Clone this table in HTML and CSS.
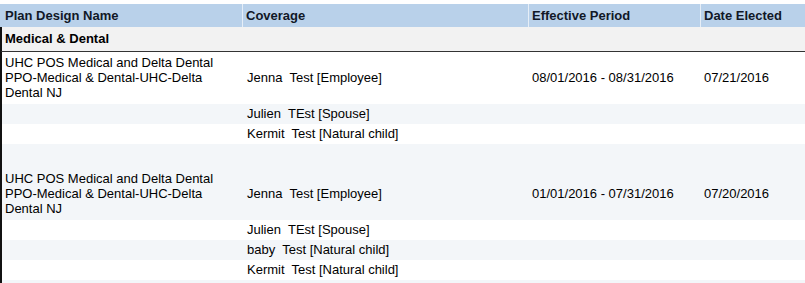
FILE: index.html
```html
<!DOCTYPE html>
<html>
<head>
<meta charset="utf-8">
<link rel="stylesheet" href="styles.css">
</head>
<body>
<div class="wrap">
<table class="plans">
<colgroup>
<col class="w1"><col class="w2"><col class="w3"><col class="w4">
</colgroup>
<thead>
<tr>
<th class="first">Plan Design Name</th>
<th>Coverage</th>
<th>Effective Period</th>
<th>Date Elected</th>
</tr>
</thead>
<tbody>
<tr class="group"><td colspan="4" class="first">Medical &amp; Dental</td></tr>
<tr class="plan white">
<td class="first">UHC POS Medical and Delta Dental PPO-Medical &amp; Dental-UHC-Delta Dental NJ</td>
<td class="cov">Jenna&nbsp; Test [Employee]</td>
<td class="per">08/01/2016 - 08/31/2016</td>
<td class="dt">07/21/2016</td>
</tr>
<tr class="dep light"><td class="first"></td><td class="cov">Julien&nbsp; TEst [Spouse]</td><td></td><td></td></tr>
<tr class="dep white"><td class="first"></td><td class="cov">Kermit&nbsp; Test [Natural child]</td><td></td><td></td></tr>
<tr class="spacer light"><td colspan="4" class="first"></td></tr>
<tr class="plan light">
<td class="first">UHC POS Medical and Delta Dental PPO-Medical &amp; Dental-UHC-Delta Dental NJ</td>
<td class="cov">Jenna&nbsp; Test [Employee]</td>
<td class="per">01/01/2016 - 07/31/2016</td>
<td class="dt">07/20/2016</td>
</tr>
<tr class="dep white"><td class="first"></td><td class="cov">Julien&nbsp; TEst [Spouse]</td><td></td><td></td></tr>
<tr class="dep light"><td class="first"></td><td class="cov">baby&nbsp; Test [Natural child]</td><td></td><td></td></tr>
<tr class="dep white"><td class="first"></td><td class="cov">Kermit&nbsp; Test [Natural child]</td><td></td><td></td></tr>
<tr class="dep light"><td class="first"></td><td></td><td></td><td></td></tr>
</tbody>
</table>
</div>
</body>
</html>
```
FILE: styles.css
```css
html, body {
  margin: 0;
  padding: 0;
  background: #ffffff;
}
body {
  font-family: "Liberation Sans", Arial, sans-serif;
  font-size: 13px;
  color: #000000;
}
.wrap {
  padding-top: 4px;
}
.plans {
  width: 805px;
  table-layout: fixed;
  border-collapse: separate;
  border-spacing: 0;
}
.w1 { width: 242px; }
.w2 { width: 286px; }
.w3 { width: 172px; }
.w4 { width: 105px; }

.plans th {
  background: #b9d1ea;
  color: #111827;
  font-weight: bold;
  text-align: left;
  line-height: 23px;
  padding: 0 3px;
  border-left: 1px solid #e6eef7;
  white-space: nowrap;
}
.plans th.first {
  border-left: none;
  padding-left: 5px;
}
.plans td {
  padding: 0 4px;
  text-align: left;
  vertical-align: middle;
}
.plans td.first {
  border-left: 2px solid #111;
  padding-left: 3px;
  padding-right: 4px;
}
.plans td.cov {
  padding-left: 5px;
}
.group td {
  background: #f2f2f2;
  font-weight: bold;
  line-height: 24px;
  border-bottom: 1px solid #333;
}
.plan td {
  line-height: 15px;
  padding-top: 3px;
  padding-bottom: 4px;
}
.dep td {
  line-height: 20px;
  height: 20px;
}
.spacer td {
  height: 24px;
  padding: 0;
}
.white td { background: #ffffff; }
.light td { background: #f3f6f9; }
```
